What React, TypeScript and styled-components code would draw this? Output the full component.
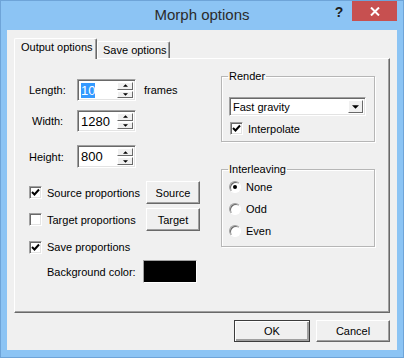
import React from 'react';
import styled, { createGlobalStyle } from 'styled-components';

const GlobalStyle = createGlobalStyle`
  html, body {
    margin: 0;
    padding: 0;
  }
  body {
    width: 404px;
    height: 358px;
    overflow: hidden;
    font-family: "Liberation Sans", Arial, sans-serif;
    font-size: 11px;
    color: #000;
  }
`;

const Window = styled.div`
  width: 404px;
  height: 358px;
  box-sizing: border-box;
  background: #8cc4f4;
  border: 1px solid #6ea4d8;
  display: flex;
  flex-direction: column;
`;

const TitleBar = styled.div`
  height: 29px;
  display: grid;
  grid-template-columns: 1fr auto 1fr;
  align-items: start;
`;

const Title = styled.div`
  grid-column: 2;
  font-size: 15px;
  line-height: 28px;
  color: #2b2b2b;
`;

const Controls = styled.div`
  grid-column: 3;
  justify-self: end;
  display: flex;
  margin-right: 6px;
`;

const HelpButton = styled.div`
  width: 26px;
  height: 20px;
  font-size: 14px;
  font-weight: bold;
  line-height: 22px;
  text-align: center;
  color: #1e1e1e;
`;

const CloseButton = styled.div`
  width: 45px;
  height: 20px;
  background: #c75050;
  display: flex;
  align-items: center;
  justify-content: center;
`;

const Client = styled.div`
  flex: 1;
  margin: 0 6px 7px 6px;
  background: #f0f0f0;
  padding: 8px 6px 0 7px;
  display: flex;
  flex-direction: column;
`;

const TabStrip = styled.div`
  height: 20px;
  display: flex;
  align-items: flex-end;
`;

const Tab = styled.div<{ $active?: boolean }>`
  box-sizing: border-box;
  position: relative;
  z-index: ${p => (p.$active ? 1 : 0)};
  width: ${p => (p.$active ? 83 : 73)}px;
  height: ${p => (p.$active ? 21 : 17)}px;
  margin-bottom: ${p => (p.$active ? -1 : 0)}px;
  background: #f0f0f0;
  border-top: 1px solid #fff;
  border-left: 1px solid #fff;
  border-right: 1px solid #696969;
  box-shadow: inset -1px 0 #a0a0a0;
  border-radius: 2px 2px 0 0;
  padding-left: ${p => (p.$active ? 6 : 5)}px;
  line-height: ${p => (p.$active ? 17 : 16)}px;
  font-size: 11px;
  white-space: nowrap;
`;

const Panel = styled.div`
  box-sizing: border-box;
  width: 376px;
  height: 255px;
  background: #f0f0f0;
  border-top: 1px solid #fff;
  border-left: 1px solid #fff;
  border-right: 1px solid #696969;
  border-bottom: 1px solid #696969;
  box-shadow: inset -1px -1px #a0a0a0;
  padding: 11px 14px 0 14px;
  display: grid;
  grid-template-columns: 1fr 154px;
  align-items: start;
`;

const LeftColumn = styled.div`
  padding-top: 9px;
  display: flex;
  flex-direction: column;
`;

const RightColumn = styled.div`
  display: flex;
  flex-direction: column;
  gap: 21px;
`;

const Row = styled.div<{ $mt?: number; $h?: number }>`
  display: flex;
  align-items: center;
  margin-top: ${p => p.$mt ?? 0}px;
  height: ${p => p.$h ?? 22}px;
`;

const FieldLabel = styled.span<{ $indent?: number }>`
  width: ${p => 48 - (p.$indent ?? 0)}px;
  padding-left: ${p => p.$indent ?? 0}px;
`;

const Units = styled.span`
  margin-left: 8px;
`;

const SpinBox = styled.div<{ $h?: number }>`
  box-sizing: border-box;
  width: 59px;
  height: ${p => p.$h ?? 22}px;
  display: flex;
  border: 1px solid;
  border-color: #a0a0a0 #fff #fff #a0a0a0;
  box-shadow: inset 1px 1px #696969, inset -1px -1px #e3e3e3;
  background: #fff;
  padding: 2px 2px 2px 2px;
`;

const SpinText = styled.div`
  flex: 1;
  display: flex;
  align-items: center;
  font-size: 13px;
  padding-left: 1px;
`;

const Selected = styled.span`
  background: #3399ff;
  color: #fff;
`;

const SpinButtons = styled.div`
  width: 16px;
  display: flex;
  flex-direction: column;
  gap: 1px;
`;

const SpinButton = styled.div`
  flex: 1;
  box-sizing: border-box;
  background: #f0f0f0;
  border: 1px solid;
  border-color: #fff #696969 #696969 #fff;
  display: flex;
  align-items: center;
  justify-content: center;
`;

const CheckRow = styled.div`
  display: flex;
  align-items: center;
  width: 117px;
`;

const CheckBox = styled.span`
  box-sizing: border-box;
  width: 13px;
  height: 13px;
  flex: none;
  border: 1px solid;
  border-color: #a0a0a0 #fff #fff #a0a0a0;
  box-shadow: inset 1px 1px #696969, inset -1px -1px #e3e3e3;
  background: #fff;
  display: flex;
  align-items: center;
  justify-content: center;
`;

const CheckText = styled.span`
  margin-left: 5px;
  white-space: nowrap;
`;

const Button = styled.div<{ $w: number; $h?: number; $default?: boolean }>`
  box-sizing: border-box;
  width: ${p => p.$w}px;
  height: ${p => p.$h ?? 23}px;
  background: #f0f0f0;
  border: 1px solid;
  border-color: ${p => (p.$default ? '#3c3c3c' : '#fff #696969 #696969 #fff')};
  box-shadow: ${p =>
    p.$default
      ? 'inset 1px 1px #fff, inset -2px -2px #a0a0a0'
      : 'inset -1px -1px #a0a0a0'};
  display: flex;
  align-items: center;
  justify-content: center;
  font-size: 11px;
`;

const Swatch = styled.div`
  box-sizing: border-box;
  width: 54px;
  height: 23px;
  margin-left: -3px;
  background: #000;
  border: 1px solid;
  border-color: #a0a0a0 #fff #fff #a0a0a0;
`;

const GroupBox = styled.fieldset<{ $h: number; $pt?: number }>`
  box-sizing: border-box;
  margin: 0;
  height: ${p => p.$h}px;
  border: 1px solid #b6b6b6;
  box-shadow: 1px 1px #fff, inset 1px 1px #fff;
  padding: ${p => p.$pt ?? 0}px 7px 0 7px;
  display: flex;
  flex-direction: column;
`;

const Legend = styled.legend`
  padding: 0 1px;
  margin-left: -1px;
  line-height: 13px;
  font-size: 11px;
`;

const Select = styled.div`
  box-sizing: border-box;
  width: 137px;
  height: 19px;
  display: flex;
  border: 1px solid;
  border-color: #a0a0a0 #fff #fff #a0a0a0;
  box-shadow: inset 1px 1px #696969, inset -1px -1px #e3e3e3;
  background: #fff;
  padding: 2px;
`;

const SelectText = styled.div`
  flex: 1;
  line-height: 15px;
  padding-left: 1px;
`;

const DropButton = styled.div`
  box-sizing: border-box;
  width: 15px;
  background: #f0f0f0;
  border: 1px solid;
  border-color: #fff #696969 #696969 #fff;
  display: flex;
  align-items: center;
  justify-content: center;
`;

const RadioRow = styled.div`
  display: flex;
  align-items: center;
  height: 22px;
`;

const Radio = styled.span`
  box-sizing: border-box;
  width: 12px;
  height: 12px;
  border-radius: 50%;
  border: 1px solid;
  border-color: #a0a0a0 #fff #fff #a0a0a0;
  box-shadow: inset 1px 1px #696969;
  background: #fff;
  display: flex;
  align-items: center;
  justify-content: center;
`;

const Dot = styled.span`
  width: 4px;
  height: 4px;
  border-radius: 50%;
  background: #000;
`;

const RadioText = styled.span`
  margin-left: 5px;
`;

const ButtonBar = styled.div`
  display: flex;
  justify-content: flex-end;
  gap: 6px;
  margin-top: 7px;
  margin-right: 1px;
`;

const Check = () => (
  <svg width="9" height="9" viewBox="0 0 9 9">
    <path d="M1 4 L3.5 6.5 L8 1.5" fill="none" stroke="#000" strokeWidth="2" />
  </svg>
);

const Arrow = ({ up, size = 5 }: { up?: boolean; size?: number }) => (
  <svg width={size} height={Math.ceil(size / 2)} viewBox="0 0 6 3">
    <path d={up ? 'M0 3 L3 0 L6 3 Z' : 'M0 0 L6 0 L3 3 Z'} fill="#000" />
  </svg>
);

function Spinner({ children, h }: { children: React.ReactNode; h?: number }) {
  return (
    <SpinBox $h={h}>
      <SpinText>{children}</SpinText>
      <SpinButtons>
        <SpinButton><Arrow up /></SpinButton>
        <SpinButton><Arrow /></SpinButton>
      </SpinButtons>
    </SpinBox>
  );
}

function CheckItem({ label, checked }: { label: string; checked?: boolean }) {
  return (
    <CheckRow>
      <CheckBox>{checked && <Check />}</CheckBox>
      <CheckText>{label}</CheckText>
    </CheckRow>
  );
}

function RadioItem({ label, checked }: { label: string; checked?: boolean }) {
  return (
    <RadioRow>
      <Radio>{checked && <Dot />}</Radio>
      <RadioText>{label}</RadioText>
    </RadioRow>
  );
}

export default function App() {
  return (
    <>
      <GlobalStyle />
      <Window>
        <TitleBar>
          <Title>Morph options</Title>
          <Controls>
            <HelpButton>?</HelpButton>
            <CloseButton>
              <svg width="10" height="9" viewBox="0 0 10 9">
                <path d="M1 0.5 L9 8.5 M9 0.5 L1 8.5" stroke="#fff" strokeWidth="2" />
              </svg>
            </CloseButton>
          </Controls>
        </TitleBar>
        <Client>
          <TabStrip>
            <Tab $active>Output options</Tab>
            <Tab>Save options</Tab>
          </TabStrip>
          <Panel>
            <LeftColumn>
              <Row>
                <FieldLabel>Length:</FieldLabel>
                <Spinner><Selected>10</Selected></Spinner>
                <Units>frames</Units>
              </Row>
              <Row $mt={9}>
                <FieldLabel $indent={3}>Width:</FieldLabel>
                <Spinner>1280</Spinner>
              </Row>
              <Row $mt={13} $h={23}>
                <FieldLabel>Height:</FieldLabel>
                <Spinner h={23}>800</Spinner>
              </Row>
              <Row $mt={13} $h={23}>
                <CheckItem label="Source proportions" checked />
                <Button $w={54}>Source</Button>
              </Row>
              <Row $mt={4} $h={23}>
                <CheckItem label="Target proportions" />
                <Button $w={54}>Target</Button>
              </Row>
              <Row $mt={5}>
                <CheckItem label="Save proportions" checked />
              </Row>
              <Row $mt={2} $h={23}>
                <CheckRow>
                  <CheckText style={{ marginLeft: 18 }}>Background color:</CheckText>
                </CheckRow>
                <Swatch />
              </Row>
            </LeftColumn>
            <RightColumn>
              <GroupBox $h={72} $pt={14}>
                <Legend>Render</Legend>
                <Select>
                  <SelectText>Fast gravity</SelectText>
                  <DropButton><Arrow size={7} /></DropButton>
                </Select>
                <Row $mt={5} $h={15}>
                  <span style={{ marginLeft: 1, display: 'flex' }}>
                    <CheckBox><Check /></CheckBox>
                  </span>
                  <CheckText>Interpolate</CheckText>
                </Row>
              </GroupBox>
              <GroupBox $h={84}>
                <Legend>Interleaving</Legend>
                <RadioItem label="None" checked />
                <RadioItem label="Odd" />
                <RadioItem label="Even" />
              </GroupBox>
            </RightColumn>
          </Panel>
          <ButtonBar>
            <Button $w={76} $h={22} $default>OK</Button>
            <Button $w={74} $h={22}>Cancel</Button>
          </ButtonBar>
        </Client>
      </Window>
    </>
  );
}
